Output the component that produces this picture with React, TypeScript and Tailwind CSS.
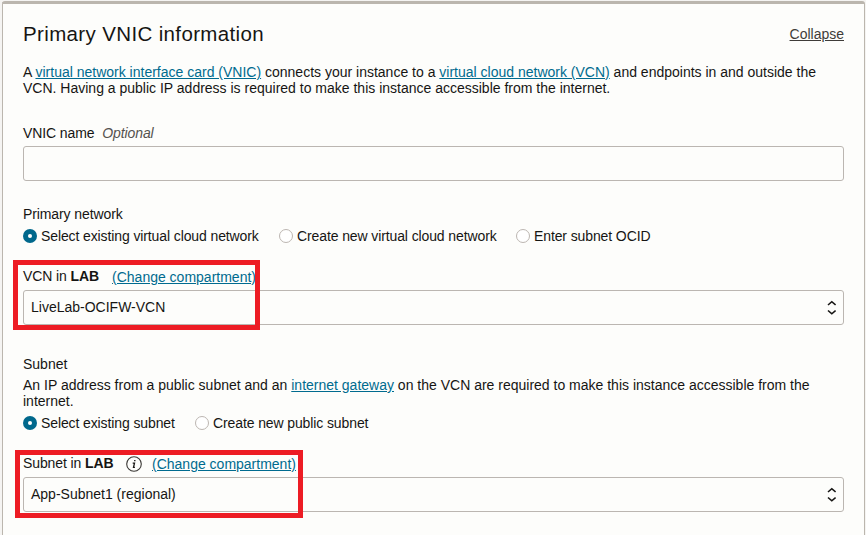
import type { ReactNode } from "react";

function Radio({ label, checked, className }: { label: string; checked?: boolean; className: string }) {
  return (
    <label className={`flex h-4 items-center ${className}`}>
      <span className={checked ? "mr-1 flex size-3.5 shrink-0 items-center justify-center rounded-full bg-[#00688c]" : "mr-1 size-3.5 shrink-0 rounded-full border border-[#bcb6b1] bg-white"}>
        {checked && <span className="size-1 rounded-full bg-white" />}
      </span>
      <span className="whitespace-nowrap tracking-[-0.11px]">{label}</span>
    </label>
  );
}

function Link({ children }: { children: ReactNode }) {
  return <a className="text-[#006b8f] underline">{children}</a>;
}

function Select({ value }: { value: string }) {
  return (
    <div className="flex h-[35px] w-[821px] items-center justify-between rounded-[3px] border border-[#bbb6b1] bg-[#fdfdfb] pl-[7px] pr-[7px]">
      <span className="-mt-0.5">{value}</span>
      <svg width="9" height="16" viewBox="0 0 9 16" fill="none" stroke="#161513" strokeWidth="1.6">
        <path d="M1 5 4.8 1.7l3.8 3.3M1 10.5l3.8 3.3 3.8-3.3" />
      </svg>
    </div>
  );
}

export default function App() {
  return (
    <div className="relative h-[535px] w-[866px] overflow-hidden bg-[#f5f4f2] pl-[2px] pt-px font-['Liberation_Sans',Arial,sans-serif] text-[14px] leading-4 text-[#161513]">
      <div className="h-[535px] w-[863px] rounded-t-[3px] border-x border-t-3 border-[#bbb6ae] bg-[#fdfdfb] pl-[20px] pt-[18px]">
        <header className="flex h-6 w-[821px] items-center justify-between">
          <h1 className="text-[20.5px] leading-6 tracking-[0.36px]">Primary VNIC information</h1>
          <a className="text-[#3f3c39] underline">Collapse</a>
        </header>
        <p className="mt-[18px] whitespace-nowrap">
          A <Link>virtual network interface card (VNIC)</Link> connects your instance to a <Link>virtual cloud network (VCN)</Link> and endpoints in and outside the
          <br />
          VCN. Having a public IP address is required to make this instance accessible from the internet.
        </p>
        <div className="mt-[29px] tracking-[-0.1px]">VNIC name <i className="ml-1 text-[#55524f]">Optional</i></div>
        <div className="mt-[5px] h-[35px] w-[821px] rounded-[3px] border border-[#bbb6b1]" />
        <div className="mt-[25px] tracking-[-0.1px]">Primary network</div>
        <div className="mt-[6px] flex">
          <Radio label="Select existing virtual cloud network" checked className="w-[256px]" />
          <Radio label="Create new virtual cloud network" className="w-[237px]" />
          <Radio label="Enter subnet OCID" className="w-[150px]" />
        </div>
        <div className="mt-[24px] flex h-4"><span className="mr-[13px] tracking-[-0.1px]">VCN in <b>LAB</b></span><span className="pt-px"><Link>(Change compartment)</Link></span></div>
        <div className="mt-[6px]"><Select value="LiveLab-OCIFW-VCN" /></div>
        <div className="mt-[31px]">Subnet</div>
        <p className="mt-[5px] whitespace-nowrap">
          An IP address from a public subnet and an <Link>internet gateway</Link> on the VCN are required to make this instance accessible from the
          <br />
          internet.
        </p>
        <div className="mt-[6px] flex">
          <Radio label="Select existing subnet" checked className="w-[172px]" />
          <Radio label="Create new public subnet" className="w-[180px]" />
        </div>
        <div className="mt-[24px] flex h-4">
          <span className="w-[91px] whitespace-nowrap tracking-[-0.1px]">Subnet in <b>LAB</b></span>
          <svg className="ml-3 mr-[10px] mt-px" width="16" height="16" viewBox="0 0 16 16">
            <circle cx="8" cy="8" r="7.3" fill="none" stroke="#3a3835" strokeWidth="1.1" />
            <path d="M8.1 4.7h1.4M6.7 7.1h1.8L7.5 11.3h1.4" fill="none" stroke="#161513" strokeWidth="1.3" />
          </svg>
          <span className="pt-px"><Link>(Change compartment)</Link></span>
        </div>
        <div className="mt-[6px]"><Select value="App-Subnet1 (regional)" /></div>
      </div>
      <div className="absolute left-[13px] top-[260px] h-[70px] w-[247px] border-5 border-[#ed1c24]" />
      <div className="absolute left-[15px] top-[450px] h-[68px] w-[288px] border-5 border-[#ed1c24]" />
    </div>
  );
}
